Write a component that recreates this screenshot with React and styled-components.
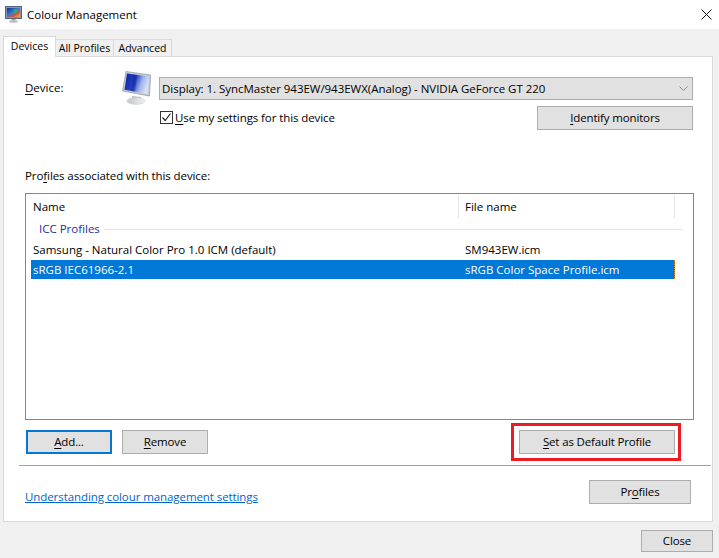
import React from 'react'
import styled, { createGlobalStyle } from 'styled-components'

const Global = createGlobalStyle`
  html, body { margin: 0; padding: 0; }
  body {
    background: #f0f0f0;
    font-family: "Open Sans", "Noto Sans", sans-serif;
    font-size: 11.5px;
    color: #000;
  }
  u { text-underline-offset: 2px; }
`

const Window = styled.div`
  width: 719px;
  height: 558px;
  display: flex;
  flex-direction: column;
  overflow: hidden;
`

const TitleBar = styled.div`
  box-sizing: border-box;
  height: 29px;
  background: #fff;
  display: flex;
  align-items: center;
  padding: 0 7px 1px 5px;
  gap: 5px;
`

const TitleText = styled.span`
  flex: 1;
`

const Body = styled.div`
  flex: 1;
  display: flex;
  flex-direction: column;
  padding: 7px 6px 0 3px;
`

const TabStrip = styled.div`
  display: flex;
  align-items: flex-end;
  height: 21px;
  position: relative;
  z-index: 1;
  margin-bottom: -1px;
`

const Tab = styled.div`
  box-sizing: border-box;
  height: ${p => (p.$active ? '21px' : '18px')};
  width: ${p => p.$w}px;
  display: flex;
  align-items: center;
  justify-content: center;
  font-size: 10.5px;
  padding-bottom: ${p => (p.$active ? '2px' : '0')};
  background: ${p => (p.$active ? '#fff' : '#f0f0f0')};
  border: 1px solid #d9d9d9;
  border-left: ${p => (p.$joined ? 'none' : '1px solid #d9d9d9')};
  border-bottom: ${p => (p.$active ? 'none' : '1px solid #d9d9d9')};
`

const Panel = styled.div`
  box-sizing: border-box;
  height: 466px;
  background: #fff;
  border: 1px solid #d9d9d9;
  display: flex;
  flex-direction: column;
  padding: 20px 0 0 21px;
`

const DeviceRow = styled.div`
  display: grid;
  grid-template-columns: 97px 37px 534px;
  grid-template-rows: 23px;
  align-items: start;
`

const DeviceLabel = styled.div`
  padding-top: 3px;
`

const MonitorSlot = styled.div`
  margin-top: -6px;
  height: 29px;
`

const Combo = styled.div`
  box-sizing: border-box;
  height: 23px;
  background: #e1e1e1;
  border: 1px solid #adadad;
  display: flex;
  align-items: center;
  justify-content: space-between;
  padding: 0 4px 1px 2px;
  letter-spacing: -0.03px;
`

const OptionsRow = styled.div`
  display: flex;
  justify-content: space-between;
  align-items: center;
  width: 534px;
  margin: 6px 0 0 134px;
`

const CheckLabel = styled.label`
  display: flex;
  align-items: center;
  gap: 2px;
  margin-left: 1px;
  padding-bottom: 1px;
  letter-spacing: -0.09px;
`

const CheckBox = styled.span`
  box-sizing: border-box;
  width: 13px;
  height: 13px;
  background: #fff;
  border: 1px solid #333;
  display: flex;
  align-items: center;
  justify-content: center;
`

const Button = styled.div`
  box-sizing: border-box;
  width: ${p => p.$w}px;
  height: ${p => p.$h || 24}px;
  padding-bottom: 1px;
  background: #e1e1e1;
  border: ${p => (p.$focused ? '2px solid #0078d7' : '1px solid #adadad')};
  display: flex;
  align-items: center;
  justify-content: center;
  flex-shrink: 0;
  letter-spacing: -0.15px;
`

const SectionLabel = styled.div`
  margin-top: 37px;
  height: 18px;
  line-height: 18px;
  letter-spacing: -0.09px;
`

const ListBox = styled.div`
  box-sizing: border-box;
  width: 669px;
  height: 227px;
  margin-top: 8px;
  border: 1px solid #828790;
  display: flex;
  flex-direction: column;
  padding: 1px 0 0 5px;
`

const HeaderRow = styled.div`
  display: grid;
  grid-template-columns: 427px 217px;
  height: 24px;
  width: 644px;
`

const HeaderCell = styled.div`
  box-sizing: border-box;
  display: flex;
  align-items: center;
  padding: 0 0 2px ${p => (p.$first ? '2px' : '6px')};
  border-left: ${p => (p.$first ? 'none' : '1px solid #e3e5e7')};
  border-right: ${p => (p.$first ? 'none' : '1px solid #e3e5e7')};
`

const GroupRow = styled.div`
  box-sizing: border-box;
  display: flex;
  align-items: center;
  gap: 4px;
  height: 20px;
  padding: 0 0 1px 8px;
  margin-bottom: 1px;
  width: 651px;
  color: #1f2f9c;
`

const GroupLine = styled.span`
  flex: 1;
  height: 1px;
  margin-top: 1px;
  background: #dbe2ef;
`

const Row = styled.div`
  box-sizing: border-box;
  display: grid;
  grid-template-columns: 432px 212px;
  width: 644px;
  height: 19px;
  align-items: center;
  padding: 0 0 1px 2px;
  color: ${p => (p.$selected ? '#fff' : '#000')};
  background: ${p => (p.$selected ? '#0078d7' : 'transparent')};
  border-right: ${p => (p.$selected ? '1px dotted #e08a2c' : 'none')};
  margin-top: ${p => (p.$selected ? '1px' : '0')};
`

const ActionRow = styled.div`
  display: flex;
  align-items: center;
  height: 38px;
  margin-top: 3px;
  padding-left: 1px;
`

const ActionGap = styled.span`
  width: ${p => p.$w}px;
`

const Highlight = styled.div`
  box-sizing: border-box;
  width: 170px;
  height: 38px;
  border: 3px solid #ed1c24;
  padding: 4px 3px 0 5px;
  margin-left: 303px;
`

const Divider = styled.div`
  width: 692px;
  height: 1px;
  background: #a0a0a0;
  margin: 4px 0 0 -6px;
`

const FootRow = styled.div`
  display: flex;
  justify-content: space-between;
  align-items: center;
  width: 666px;
  margin-top: 13px;
`

const HelpLink = styled.a`
  color: #0066cc;
  text-decoration: underline;
  margin-top: 10px;
  letter-spacing: -0.08px;
`

const WindowFoot = styled.div`
  display: flex;
  justify-content: flex-end;
  padding: 8px 0 0 0;
`

const TitleIcon = () => (
  <svg width="17" height="17" viewBox="0 0 17 17">
    <defs>
      <linearGradient id="ti" x1="0" y1="0" x2="1" y2="1">
        <stop offset="0" stopColor="#1a2a9a" />
        <stop offset="0.45" stopColor="#2f7fd0" />
        <stop offset="0.7" stopColor="#e0503a" />
        <stop offset="1" stopColor="#e8c030" />
      </linearGradient>
    </defs>
    <rect x="0.5" y="0.5" width="16" height="12" fill="#8a94ac" stroke="#5a6478" />
    <rect x="2" y="2" width="13" height="9" fill="url(#ti)" />
    <rect x="9" y="3" width="3" height="4" fill="#38b060" opacity="0.8" />
    <rect x="6.5" y="13" width="4" height="1.5" fill="#9a9a9a" />
    <rect x="4.5" y="14.5" width="8" height="2" fill="#b4b4b4" />
  </svg>
)

const MonitorIcon = () => (
  <svg width="30" height="34" viewBox="0 0 30 34">
    <defs>
      <linearGradient id="scr" x1="0" y1="0" x2="1" y2="0.3">
        <stop offset="0" stopColor="#0c1f9c" />
        <stop offset="0.5" stopColor="#2a45c4" />
        <stop offset="0.75" stopColor="#9ab0e8" />
        <stop offset="1" stopColor="#d4dff5" />
      </linearGradient>
      <linearGradient id="stand" x1="0" y1="0" x2="1" y2="0">
        <stop offset="0" stopColor="#c4c8cc" />
        <stop offset="1" stopColor="#f0f0f0" />
      </linearGradient>
    </defs>
    <path d="M4 0.5 L28.5 4 L27.5 25 L0.5 20 Z" fill="#c8ccd2" stroke="#8e949c" strokeWidth="0.7" />
    <path d="M5 2.5 L27 5.5 L26 23 L2.5 18.8 Z" fill="url(#scr)" />
    <path d="M11 3.4 L15 4 L13 20.8 L9 20 Z" fill="#0a1a80" opacity="0.35" />
    <path d="M10 25 L19 26 L19 29 L10 28 Z" fill="#b8bcc0" />
    <ellipse cx="14" cy="30" rx="9" ry="3.4" fill="url(#stand)" stroke="#c0c4c8" strokeWidth="0.5" />
  </svg>
)

const Chevron = () => (
  <svg width="9" height="5" viewBox="0 0 9 5">
    <path d="M0.5 0.5 L4.5 4.5 L8.5 0.5" fill="none" stroke="#8a8a8a" strokeWidth="1" />
  </svg>
)

const CloseIcon = () => (
  <svg width="11" height="11" viewBox="0 0 11 11">
    <path d="M0.5 0.5 L10.5 10.5 M10.5 0.5 L0.5 10.5" fill="none" stroke="#111" strokeWidth="1" />
  </svg>
)

const Tick = () => (
  <svg width="11" height="11" viewBox="0 0 11 11">
    <path d="M1.5 5.5 L4.2 8.5 L9.5 1.5" fill="none" stroke="#222" strokeWidth="1.2" />
  </svg>
)

export default function App() {
  return (
    <Window>
      <Global />
      <TitleBar>
        <TitleIcon />
        <TitleText>Colour Management</TitleText>
        <CloseIcon />
      </TitleBar>
      <Body>
        <TabStrip>
          <Tab $active $w={53}>Devices</Tab>
          <Tab $joined $w={58}>All Profiles</Tab>
          <Tab $joined $w={58}>Advanced</Tab>
        </TabStrip>
        <Panel>
          <DeviceRow>
            <DeviceLabel><u>D</u>evice:</DeviceLabel>
            <MonitorSlot><MonitorIcon /></MonitorSlot>
            <Combo>
              <span>Display: 1. SyncMaster 943EW/943EWX(Analog) - NVIDIA GeForce GT 220</span>
              <Chevron />
            </Combo>
          </DeviceRow>
          <OptionsRow>
            <CheckLabel>
              <CheckBox><Tick /></CheckBox>
              <span><u>U</u>se my settings for this device</span>
            </CheckLabel>
            <Button $w={156}><span><u>I</u>dentify monitors</span></Button>
          </OptionsRow>
          <SectionLabel>Pro<u>f</u>iles associated with this device:</SectionLabel>
          <ListBox>
            <HeaderRow>
              <HeaderCell $first>Name</HeaderCell>
              <HeaderCell>File name</HeaderCell>
            </HeaderRow>
            <GroupRow>
              <span>ICC Profiles</span>
              <GroupLine />
            </GroupRow>
            <Row>
              <span>Samsung - Natural Color Pro 1.0 ICM (default)</span>
              <span>SM943EW.icm</span>
            </Row>
            <Row $selected>
              <span>sRGB IEC61966-2.1</span>
              <span>sRGB Color Space Profile.icm</span>
            </Row>
          </ListBox>
          <ActionRow>
            <Button $focused $w={86}><span><u>A</u>dd...</span></Button>
            <ActionGap $w={10} />
            <Button $w={86}><span><u>R</u>emove</span></Button>
            <Highlight>
              <Button $w={156}><span><u>S</u>et as Default Profile</span></Button>
            </Highlight>
          </ActionRow>
          <Divider />
          <FootRow>
            <HelpLink>Understanding colour management settings</HelpLink>
            <Button $w={102}><span>Pr<u>o</u>files</span></Button>
          </FootRow>
        </Panel>
        <WindowFoot>
          <Button $w={72} $h={22}>Close</Button>
        </WindowFoot>
      </Body>
    </Window>
  )
}
